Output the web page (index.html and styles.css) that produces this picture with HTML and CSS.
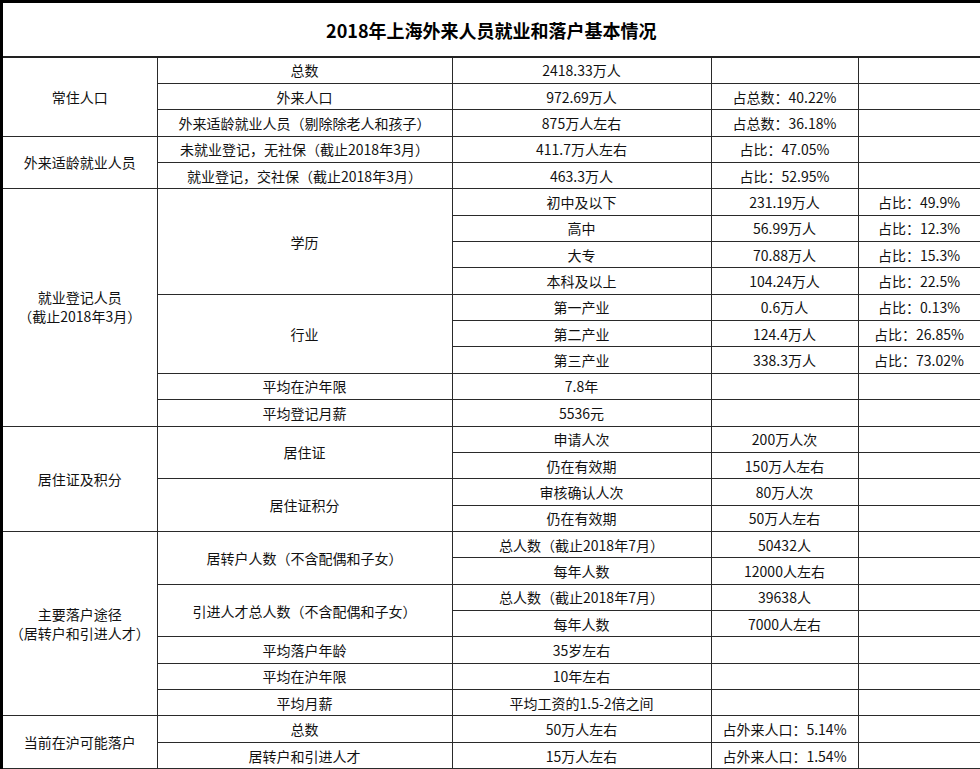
FILE: index.html
```html
<!DOCTYPE html>
<html lang="zh-CN">
<head>
<meta charset="utf-8">
<title>2018年上海外来人员就业和落户基本情况</title>
<link rel="stylesheet" href="styles.css">
</head>
<body>
<table class="sheet">
  <colgroup>
    <col class="c1"><col class="c2"><col class="c3"><col class="c4"><col class="c5">
  </colgroup>
  <tr class="title-row"><td colspan="5" class="title">2018年上海外来人员就业和落户基本情况</td></tr>
  <tr><td rowspan="3">常住人口</td><td>总数</td><td>2418.33万人</td><td></td><td></td></tr>
  <tr><td>外来人口</td><td>972.69万人</td><td>占总数：40.22%</td><td></td></tr>
  <tr><td>外来适龄就业人员（剔除除老人和孩子）</td><td>875万人左右</td><td>占总数：36.18%</td><td></td></tr>
  <tr><td rowspan="2">外来适龄就业人员</td><td>未就业登记，无社保（截止2018年3月）</td><td>411.7万人左右</td><td>占比：47.05%</td><td></td></tr>
  <tr><td>就业登记，交社保（截止2018年3月）</td><td>463.3万人</td><td>占比：52.95%</td><td></td></tr>
  <tr><td rowspan="9" class="two"><span class="ln">就业登记人员</span><span class="ln">（截止2018年3月）</span></td><td rowspan="4">学历</td><td>初中及以下</td><td>231.19万人</td><td>占比：49.9%</td></tr>
  <tr><td>高中</td><td>56.99万人</td><td>占比：12.3%</td></tr>
  <tr><td>大专</td><td>70.88万人</td><td>占比：15.3%</td></tr>
  <tr><td>本科及以上</td><td>104.24万人</td><td>占比：22.5%</td></tr>
  <tr><td rowspan="3">行业</td><td>第一产业</td><td>0.6万人</td><td>占比：0.13%</td></tr>
  <tr><td>第二产业</td><td>124.4万人</td><td>占比：26.85%</td></tr>
  <tr><td>第三产业</td><td>338.3万人</td><td>占比：73.02%</td></tr>
  <tr><td>平均在沪年限</td><td>7.8年</td><td></td><td></td></tr>
  <tr><td>平均登记月薪</td><td>5536元</td><td></td><td></td></tr>
  <tr><td rowspan="4">居住证及积分</td><td rowspan="2">居住证</td><td>申请人次</td><td>200万人次</td><td></td></tr>
  <tr><td>仍在有效期</td><td>150万人左右</td><td></td></tr>
  <tr><td rowspan="2">居住证积分</td><td>审核确认人次</td><td>80万人次</td><td></td></tr>
  <tr><td>仍在有效期</td><td>50万人左右</td><td></td></tr>
  <tr><td rowspan="7" class="two"><span class="ln">主要落户途径</span><span class="ln">（居转户和引进人才）</span></td><td rowspan="2">居转户人数（不含配偶和子女）</td><td>总人数（截止2018年7月）</td><td>50432人</td><td></td></tr>
  <tr><td>每年人数</td><td>12000人左右</td><td></td></tr>
  <tr><td rowspan="2">引进人才总人数（不含配偶和子女）</td><td>总人数（截止2018年7月）</td><td>39638人</td><td></td></tr>
  <tr><td>每年人数</td><td>7000人左右</td><td></td></tr>
  <tr><td>平均落户年龄</td><td>35岁左右</td><td></td><td></td></tr>
  <tr><td>平均在沪年限</td><td>10年左右</td><td></td><td></td></tr>
  <tr><td>平均月薪</td><td>平均工资的1.5-2倍之间</td><td></td><td></td></tr>
  <tr><td rowspan="2">当前在沪可能落户</td><td>总数</td><td>50万人左右</td><td>占外来人口：5.14%</td><td></td></tr>
  <tr><td>居转户和引进人才</td><td>15万人左右</td><td>占外来人口：1.54%</td><td></td></tr>
</table>
</body>
</html>
```
FILE: styles.css
```css
html, body {
  margin: 0;
  padding: 0;
  background: #000;
  overflow: hidden;
}
body {
  padding: 3px 0 0 3px;
  font-family: "Noto Sans CJK SC", "Noto Sans", sans-serif;
  font-size: 14px;
  color: #111;
}
.sheet {
  table-layout: fixed;
  border-collapse: collapse;
  width: 977px;
  background: #fff;
}
.c1 { width: 154px; }
.c2 { width: 295px; }
.c3 { width: 259px; }
.c4 { width: 147px; }
.c5 { width: 122px; }
.sheet td {
  border: 1px solid #2a2a2a;
  padding: 0;
  text-align: center;
  vertical-align: middle;
  line-height: 18px;
  white-space: nowrap;
}
.sheet td.two .ln {
  display: block;
  height: 19px;
  line-height: 19px;
  overflow: visible;
}
.sheet tr { height: 26.37px; }
.sheet tr.title-row { height: 54px; }
.sheet td.title {
  font-size: 18px;
  font-weight: 700;
  color: #000;
  border-top: none;
  border-left: none;
  border-right: 1px solid #e6e6e6;
  border-bottom: 2px solid #222;
}
.sheet tr td:first-child { border-left: none; }
.sheet tr td:last-child { border-right-color: #e6e6e6; }
```
